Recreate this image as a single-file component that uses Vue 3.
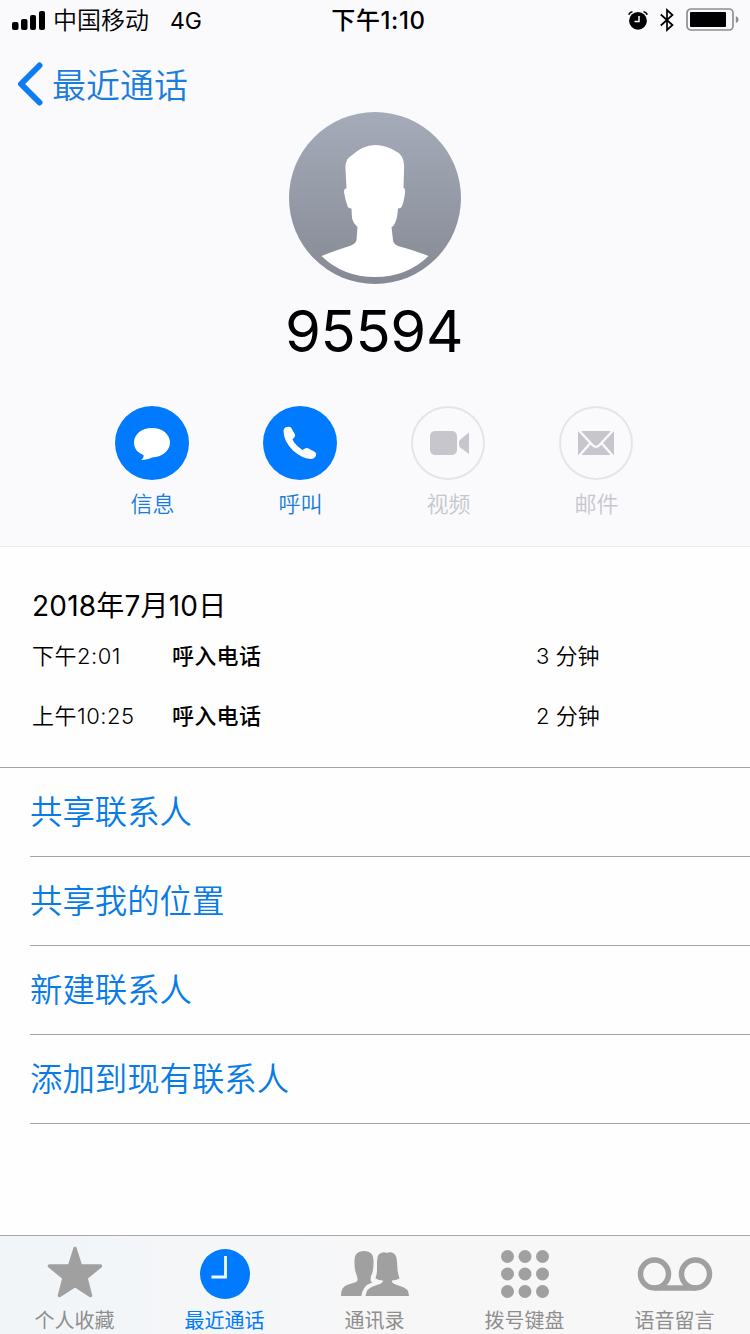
<template>
  <div class="phone">
    <header class="contact">
      <div class="status-bar">
        <div class="status-left">
          <svg class="signal" width="33" height="21" viewBox="0 0 33 21">
            <rect x="0" y="12" width="6.5" height="8" rx="2" />
            <rect x="9" y="9" width="6.5" height="11" rx="2" />
            <rect x="18" y="5" width="6" height="15" rx="2" />
            <rect x="27" y="1" width="6" height="19" rx="2" />
          </svg>
          <span class="carrier">中国移动</span>
          <span class="network">4G</span>
        </div>
        <span class="clock">下午1:10</span>
        <div class="status-right">
          <svg class="alarm" width="20" height="20" viewBox="0 0 20 20">
            <circle cx="10" cy="10.8" r="8.9" />
            <path d="M.9 4.8Q1.5 2.2 4.5 1.8M15.5 1.8Q18.5 2.2 19.1 4.8" fill="none" stroke="#000" stroke-width="1.6" />
            <path d="M11 6V11.5H6.5" fill="none" stroke="#fff" stroke-width="1.5" />
          </svg>
          <svg class="bluetooth" width="14" height="24" viewBox="0 0 14 24">
            <path d="M.8 6.5 12.5 17 7 22V2l5.5 5L.8 17.5" fill="none" stroke="#000" stroke-width="1.7" />
          </svg>
          <svg class="battery" width="53" height="24" viewBox="0 0 53 24">
            <rect x="1" y="1" width="46" height="21" rx="4" fill="none" stroke="#8e8e92" stroke-width="1.7" />
            <rect x="4" y="4" width="36" height="15" rx="1" />
            <path d="M49.8 8q2.8 1 2.8 3.5t-2.8 3.5z" fill="#8e8e92" />
          </svg>
        </div>
      </div>

      <a class="back">
        <svg width="26" height="44" viewBox="0 0 26 44">
          <path d="M22.5 3.5 4 22l18.5 18.5" fill="none" stroke="#0d7bf2" stroke-width="6" stroke-linecap="round" stroke-linejoin="round" />
        </svg>
        <span>最近通话</span>
      </a>

      <svg class="avatar" width="172" height="172" viewBox="0 0 172 172">
        <defs>
          <linearGradient id="avatar-bg" x1="0" y1="0" x2="0" y2="1">
            <stop offset="0" stop-color="#a5abb9" />
            <stop offset="1" stop-color="#858a94" />
          </linearGradient>
        </defs>
        <circle cx="86" cy="86" r="86" fill="url(#avatar-bg)" />
        <path
          d="M86 33C96 33 103 37 109 40.5C114 44 115.500 50 115 58L114.500 76Q116.500 75.500 116 81Q115 90 112.500 95Q112 96 109 96.500Q108.500 106 106 111Q105 114 102.500 115L104 128Q104 131.500 109 134Q127 139 139.500 144Q118 165 86 165Q54 165 32.500 144Q45 139 62 133.500Q67 131 67.500 128L68.500 115Q64 111 63 106L62.500 96.500Q59 96 58.500 94Q56 87 55 80Q55 76 57.500 76.500L56.500 57Q56 47 62 44Q74 33 86 33Z"
          fill="#fff"
        />
      </svg>
      <h1 class="number">95594</h1>

      <div class="actions">
        <div v-for="item in actions" :key="item.id" class="action" :class="{ disabled: item.disabled }">
          <div class="action-circle">
            <svg v-if="item.id === 'message'" width="74" height="74" viewBox="0 0 74 74">
              <path d="M37 22C47 22 55 28 55 36.5S47 51 37 51.500Q33 53.500 26 54Q29 52 28.500 49C22 46.500 19 42 19 36.500C19 28 27 22 37 22Z" fill="#fff" />
            </svg>
            <svg v-else-if="item.id === 'call'" width="74" height="74" viewBox="0 0 74 74">
              <path d="M22.3 21.5Q25.5 20 28 21.500L32 28.500Q32.500 30 31.500 31L29.500 33.500Q32 39 39.500 44L42 42.500Q43.500 41.500 45 42.200L52 46Q54 48 52.500 50.500Q51 53 47.500 53Q39 52.500 30 44.500Q20.500 35 20.500 25Q20.500 22.500 22.300 21.500Z" fill="#fff" />
            </svg>
            <svg v-else-if="item.id === 'video'" width="74" height="74" viewBox="0 0 74 74" fill="#c6c6cc">
              <rect x="19" y="25" width="27" height="24" rx="5" />
              <path d="M58 26.5V48L50 42Q48 41 48 38V36.500Q48 34 50 33Z" />
            </svg>
            <svg v-else width="74" height="74" viewBox="0 0 74 74">
              <rect x="19" y="25" width="36" height="24" fill="#c6c6cc" />
              <path d="M20 24.5 33 38.5Q37 43.500 41 38.500L54 24.500M20 50 31.500 37M54 50 42.500 37" fill="none" stroke="#fafafd" stroke-width="2.4" />
            </svg>
          </div>
          <span>{{ item.label }}</span>
        </div>
      </div>
    </header>

    <section class="history">
      <h2>2018年7月10日</h2>
      <div v-for="call in calls" :key="call.time" class="call-row">
        <span class="call-time">{{ call.time }}</span>
        <span class="call-type">{{ call.type }}</span>
        <span class="call-length">{{ call.length }}</span>
      </div>
    </section>

    <ul class="links">
      <li v-for="link in links" :key="link">{{ link }}</li>
    </ul>

    <nav class="tab-bar">
      <a v-for="tab in tabs" :key="tab.id" class="tab" :class="{ active: tab.id === 'recent' }">
        <svg v-if="tab.id === 'favorite'" width="80" height="66" viewBox="0 0 80 66">
          <path d="M40 12.5 45.500 30H65.500L51 42 55.500 59.500 40 49.500 24.500 59.500 29 42 14.500 30H34.500Z" stroke="currentColor" stroke-width="3.5" stroke-linejoin="round" />
        </svg>
        <svg v-else-if="tab.id === 'recent'" width="80" height="66" viewBox="0 0 80 66">
          <circle cx="40" cy="38" r="25" />
          <path d="M40.5 20V41H26.500" fill="none" stroke="#f2f8fd" stroke-width="2.8" />
        </svg>
        <svg v-else-if="tab.id === 'contacts'" width="80" height="66" viewBox="0 0 80 66">
          <path d="M29 15C36 15 39 19 38.500 27Q38.500 36 36 40L35.500 44Q36 47 43 49L50 53V60H6Q6 51 12 49L21 46Q23 45 22.500 43L22 40Q19.500 35 19.500 27C19 19 22 15 29 15Z" />
          <path d="M28.5 62Q29.500 51.500 38 49L48 45.500" fill="none" stroke="#f7f7f8" stroke-width="5" />
          <path d="M51.5 17Q54 16 57 16.500Q62 18 62 26L62.500 34Q63 38 64.500 42.500Q61 44.500 57 44.500V46Q58 48 65 50Q74 52 74 60H30.500Q31.500 52 39 50L46 47.500Q48 46 48 44.500Q44 44.500 40.500 42.500Q42 38 42 34V26Q42 18 46 17Q49.500 15.500 51.500 17Z" />
          <path d="M25 60H31V65H25Z" fill="#f7f7f8" />
        </svg>
        <svg v-else-if="tab.id === 'keypad'" width="80" height="66" viewBox="0 0 80 66">
          <circle v-for="n in 9" :key="n" :cx="22.5 + ((n - 1) % 3) * 17.5" :cy="20.5 + Math.floor((n - 1) / 3) * 17.5" r="6.5" />
        </svg>
        <svg v-else class="outline" width="80" height="66" viewBox="0 0 80 66" stroke="currentColor" stroke-width="5.5">
          <circle cx="19.5" cy="38" r="14" />
          <circle cx="60.5" cy="38" r="14" />
          <path d="M19.5 52H60.500" />
        </svg>
        <span>{{ tab.label }}</span>
      </a>
    </nav>
  </div>
</template>

<script setup>
const actions = [
  { id: 'message', label: '信息' },
  { id: 'call', label: '呼叫' },
  { id: 'video', label: '视频', disabled: true },
  { id: 'mail', label: '邮件', disabled: true }
]

const calls = [
  { time: '下午2:01', type: '呼入电话', length: '3 分钟' },
  { time: '上午10:25', type: '呼入电话', length: '2 分钟' }
]

const links = ['共享联系人', '共享我的位置', '新建联系人', '添加到现有联系人']

const tabs = [
  { id: 'favorite', label: '个人收藏' },
  { id: 'recent', label: '最近通话' },
  { id: 'contacts', label: '通讯录' },
  { id: 'keypad', label: '拨号键盘' },
  { id: 'voicemail', label: '语音留言' }
]
</script>

<style>
body {
  margin: 0;
}
</style>

<style scoped>
.phone {
  display: flex;
  flex-direction: column;
  width: 750px;
  height: 1334px;
  overflow: hidden;
  background: #fefefe;
  color: #000;
  font-family: Inter, "Noto Sans CJK SC", sans-serif;
}

svg {
  display: block;
  flex: none;
}

.contact {
  display: flex;
  flex-direction: column;
  box-sizing: border-box;
  height: 547px;
  border-bottom: 1px solid #ececf0;
  background: #fafafd;
}

.status-bar {
  display: grid;
  grid-template-columns: 1fr auto 1fr;
  align-items: center;
  height: 40px;
  padding: 0 11px 0 12px;
  font-size: 24px;
  line-height: 40px;
}

.status-left,
.status-right {
  display: flex;
  align-items: center;
}

.status-left span,
.clock {
  padding-top: 2px;
  line-height: 38px;
}

.status-right {
  justify-content: flex-end;
}

.carrier {
  margin-left: 8px;
  font-weight: 350;
}

.network {
  margin-left: 21px;
  font-size: 23px;
}

.clock {
  padding-left: 6px;
  font-size: 24px;
  font-weight: 500;
  letter-spacing: 0.6px;
}

.bluetooth {
  margin: 0 12px;
}

.back {
  display: flex;
  align-items: center;
  gap: 9px;
  height: 72px;
  padding: 0 0 0 17px;
  margin-top: 8px;
  margin-bottom: -8px;
  box-sizing: border-box;
  color: #1a7cdb;
  font-size: 34px;
  font-weight: 350;
}

.back span {
  padding-bottom: 1px;
}

.avatar {
  align-self: center;
}

.number {
  height: 94px;
  margin: 0;
  text-align: center;
  text-indent: -2px;
  font-size: 58px;
  font-weight: 400;
  letter-spacing: -0.4px;
  line-height: 94px;
}

.actions {
  display: flex;
  justify-content: center;
  gap: 74px;
  padding: 28px 2px 0 0;
}

.action {
  display: flex;
  flex-direction: column;
  align-items: center;
  width: 74px;
  color: #1a7cdb;
  font-size: 22px;
  font-weight: 350;
  line-height: 32px;
}

.action span {
  padding-left: 1px;
}

.action-circle {
  width: 74px;
  height: 74px;
  margin-bottom: 8px;
  border-radius: 50%;
  background: #007aff;
}

.action.disabled {
  color: #c6c6cc;
}

.disabled .action-circle {
  background: none;
  box-shadow: inset 0 0 0 2px #e4e4ea;
}

.history {
  box-sizing: border-box;
  height: 221px;
  padding: 39px 32px 0;
  border-bottom: 1px solid #a5a5a8;
}

.history h2 {
  margin: 0;
  font-size: 28px;
  font-weight: 400;
  letter-spacing: 0.2px;
  line-height: 40px;
}

.call-row {
  display: grid;
  grid-template-columns: 140px 364px 1fr;
  height: 60px;
  font-size: 22px;
  font-weight: 350;
  line-height: 60px;
}

.call-time {
  letter-spacing: 0.5px;
}

.call-type {
  font-weight: 500;
  letter-spacing: 0.3px;
}

.links {
  margin: 0;
  padding: 0 0 0 30px;
  list-style: none;
}

.links li {
  box-sizing: border-box;
  height: 89px;
  padding-top: 1px;
  border-bottom: 1px solid #a5a5a8;
  color: #087be7;
  font-size: 32.4px;
  font-weight: 350;
  line-height: 88px;
}

.tab-bar {
  display: flex;
  box-sizing: border-box;
  height: 99px;
  margin-top: auto;
  border-top: 1px solid #a8a8aa;
  background: linear-gradient(90deg, #f1f5f8, #f7f7f8 50%);
}

.tab {
  display: flex;
  flex: 1;
  flex-direction: column;
  align-items: center;
  color: #8e8e8e;
  font-size: 20px;
  line-height: 30px;
}

.tab span {
  padding: 4px 1px 0 0;
}

.tab svg {
  color: #a0a0a0;
  fill: currentColor;
}

.tab svg.outline {
  fill: none;
}

.tab.active,
.tab.active svg {
  color: #007aff;
}
</style>
